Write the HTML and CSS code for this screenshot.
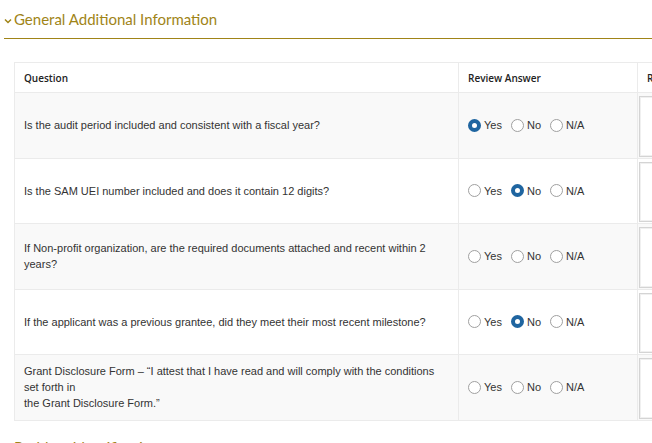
FILE: index.html
```html
<!DOCTYPE html>
<html lang="en">
<head>
  <meta charset="UTF-8" />
  <meta name="viewport" content="width=device-width, initial-scale=1.0" />
  <title>Review Checklist</title>
  <link rel="stylesheet" href="styles.css">
</head>
<body>
  <section class="panel">
    <h2 class="panel-title">
      <svg class="chevron" width="8" height="6" viewBox="0 0 8 6"><path d="M1 1.5 L4 4.5 L7 1.5" fill="none" stroke="currentColor" stroke-width="1.5"/></svg>
      General Additional Information
    </h2>

    <div class="table-wrapper">
      <table class="review-table">
        <thead>
          <tr>
            <th class="col-question">Question</th>
            <th class="col-answer">Review Answer</th>
            <th class="col-comment">Reviewer Comments</th>
          </tr>
        </thead>
        <tbody>
          <tr>
            <td>Is the audit period included and consistent with a fiscal year?</td>
            <td>
              <div class="choices">
                <label><input type="radio" name="q1" checked> Yes</label>
                <label><input type="radio" name="q1"> No</label>
                <label><input type="radio" name="q1"> N/A</label>
              </div>
            </td>
            <td><div class="comment-box"></div></td>
          </tr>
          <tr>
            <td>Is the SAM UEI number included and does it contain 12 digits?</td>
            <td>
              <div class="choices">
                <label><input type="radio" name="q2"> Yes</label>
                <label><input type="radio" name="q2" checked> No</label>
                <label><input type="radio" name="q2"> N/A</label>
              </div>
            </td>
            <td><div class="comment-box"></div></td>
          </tr>
          <tr>
            <td>If Non-profit organization, are the required documents attached and recent within 2 years?</td>
            <td>
              <div class="choices">
                <label><input type="radio" name="q3"> Yes</label>
                <label><input type="radio" name="q3"> No</label>
                <label><input type="radio" name="q3"> N/A</label>
              </div>
            </td>
            <td><div class="comment-box"></div></td>
          </tr>
          <tr>
            <td>If the applicant was a previous grantee, did they meet their most recent milestone?</td>
            <td>
              <div class="choices">
                <label><input type="radio" name="q4"> Yes</label>
                <label><input type="radio" name="q4" checked> No</label>
                <label><input type="radio" name="q4"> N/A</label>
              </div>
            </td>
            <td><div class="comment-box"></div></td>
          </tr>
          <tr>
            <td>Grant Disclosure Form – “I attest that I have read and will comply with the conditions set forth in<br>the Grant Disclosure Form.”</td>
            <td>
              <div class="choices">
                <label><input type="radio" name="q5"> Yes</label>
                <label><input type="radio" name="q5"> No</label>
                <label><input type="radio" name="q5"> N/A</label>
              </div>
            </td>
            <td><div class="comment-box"></div></td>
          </tr>
        </tbody>
      </table>
    </div>
  </section>

  <section class="panel">
    <h2 class="panel-title next">Problem Identification</h2>
  </section>
</body>
</html>
```

FILE: styles.css
```css
body {
  margin: 0;
  padding: 0 0 0 4px;
  font-family: "Liberation Sans", Arial, sans-serif;
  color: #333;
  background: #fff;
  overflow: hidden;
}

.panel-title {
  margin: 0;
  padding: 9px 0 8px 0;
  font-family: Lato, "Open Sans", sans-serif;
  font-weight: 400;
  font-size: 15px;
  line-height: 21px;
  color: #a08417;
  border-bottom: 1px solid #a08417;
  display: flex;
  align-items: center;
  gap: 2px;
}

.panel-title.next {
  border-bottom: none;
  padding-left: 10px;
  margin-top: 7px;
}

.chevron {
  margin-top: 2px;
}

.table-wrapper {
  padding: 23px 0 0 10px;
  overflow: hidden;
}

.review-table {
  border-collapse: collapse;
  table-layout: fixed;
  width: 820px;
  border: 1px solid #ebebeb;
}

/* widths are content widths; cells add 9px padding each side */
.col-question { width: 425px; }
.col-answer { width: 160px; }

.review-table th,
.review-table td {
  border: 1px solid #ebebeb;
  padding: 0 9px;
  text-align: left;
  vertical-align: middle;
  font-size: 11px;
  line-height: 16px;
}

.review-table th {
  height: 29px;
  font-family: "Open Sans", sans-serif;
  font-weight: 600;
  font-size: 10px;
  color: #222;
}

.review-table tbody tr:nth-child(odd) {
  background: #f9f9f9;
}

.choices {
  display: flex;
  gap: 9px;
}

.choices label {
  display: flex;
  align-items: center;
  gap: 3px;
}

.choices input {
  appearance: none;
  margin: 0;
  width: 13px;
  height: 13px;
  border: 1px solid #a0a0a0;
  border-radius: 50%;
  background: #fff;
  box-sizing: border-box;
}

.choices input:checked {
  border: 4px solid #1f65a0;
  background: #fff;
}

.review-table td:last-child {
  padding: 3px 0 1px 1px;
}

.comment-box {
  box-sizing: border-box;
  height: 60.5px;
  border: 1px solid #d4d4d4;
  box-shadow: inset 0 0 0 1px #f0f0f0;
  background: #fff;
}
```
